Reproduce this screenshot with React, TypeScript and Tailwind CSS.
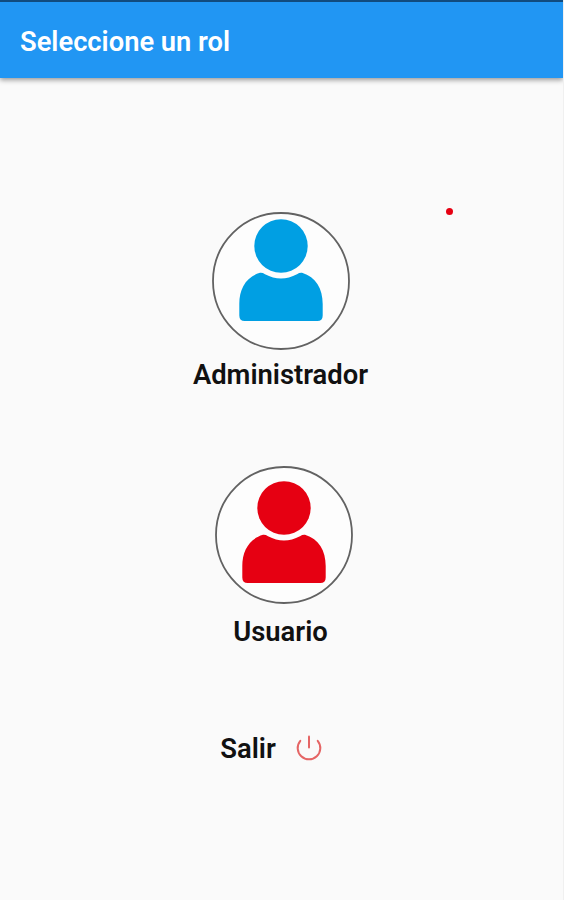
import React from "react";

interface RoleButtonProps {
	label: string;
	color: string;
	iconOffset: number;
	className?: string;
	labelClassName?: string;
}

const RoleButton: React.FC<RoleButtonProps> = ({
	label,
	color,
	iconOffset,
	className,
	labelClassName,
}) => {
	return (
		<button className="flex flex-col items-center">
			<svg
				width={138}
				height={138}
				viewBox="0 0 138 138"
				className={className}>
				<circle
					cx={69}
					cy={69}
					r={68}
					fill="#fdfdfd"
					stroke="#626262"
					strokeWidth={1.8}
				/>
				{/* Head and shoulders */}
				<g fill={color} transform={`translate(0 ${iconOffset})`}>
					<circle cx={69} cy={34} r={26.7} />
					<path d="M48 60.8Q50.500 60.500 53 62.200Q69 70.600 85 62.200Q87.500 60.500 90 60.800C104 65 110.700 77 110.700 92V103.500Q110.700 109 105.200 109H32.800Q27.300 109 27.300 103.500V92C27.300 77 34 65 48 60.800Z" />
				</g>
			</svg>
			<span className={labelClassName}>{label}</span>
		</button>
	);
};

const App: React.FC = () => {
	return (
		<div className="h-[900px] w-[564px] overflow-hidden border-r border-[#f0f0f0] bg-[#fafafa] font-['Roboto',sans-serif] text-[#111111]">
			{/* App bar */}
			<header className="flex h-[78px] items-center border-t-2 border-[#114b7e] bg-[#2196f3] pt-[3px] pl-5 shadow-[0_2px_5px_rgba(0,0,0,0.4)]">
				<h1 className="text-[27.3px] leading-8 font-semibold text-white">
					Seleccione un rol
				</h1>
			</header>

			<main className="flex flex-col items-center pr-0.5">
				<div className="mt-[130px] mr-[108px] size-[7px] self-end rounded-full bg-[#e60012]" />

				<div className="-mt-[3px]">
					<RoleButton
						label="Administrador"
						color="#009fe3"
						iconOffset={0}
						className="ml-px"
						labelClassName="mt-[9px] text-[27.4px] leading-8 font-semibold"
					/>
				</div>

				<div className="mt-[75px]">
					<RoleButton
						label="Usuario"
						color="#e60012"
						iconOffset={8}
						className="ml-[6px]"
						labelClassName="mt-[12px] text-[27.4px] leading-8 font-semibold"
					/>
				</div>

				<button className="mt-[85px] mr-[19px] flex items-center gap-5">
					<span className="text-[27.4px] leading-8 font-semibold">
						Salir
					</span>
					<svg
						width={26}
						height={26}
						viewBox="0 0 26 26"
						fill="none"
						stroke="#e56565"
						strokeWidth={2}
						strokeLinecap="round"
						className="-mt-0.5">
						<path d="M13 1.500V12.500" />
						<path d="M4.300 5.800A11.300 11.300 0 1 0 21.700 5.800" />
					</svg>
				</button>
			</main>
		</div>
	);
};

export default App;
